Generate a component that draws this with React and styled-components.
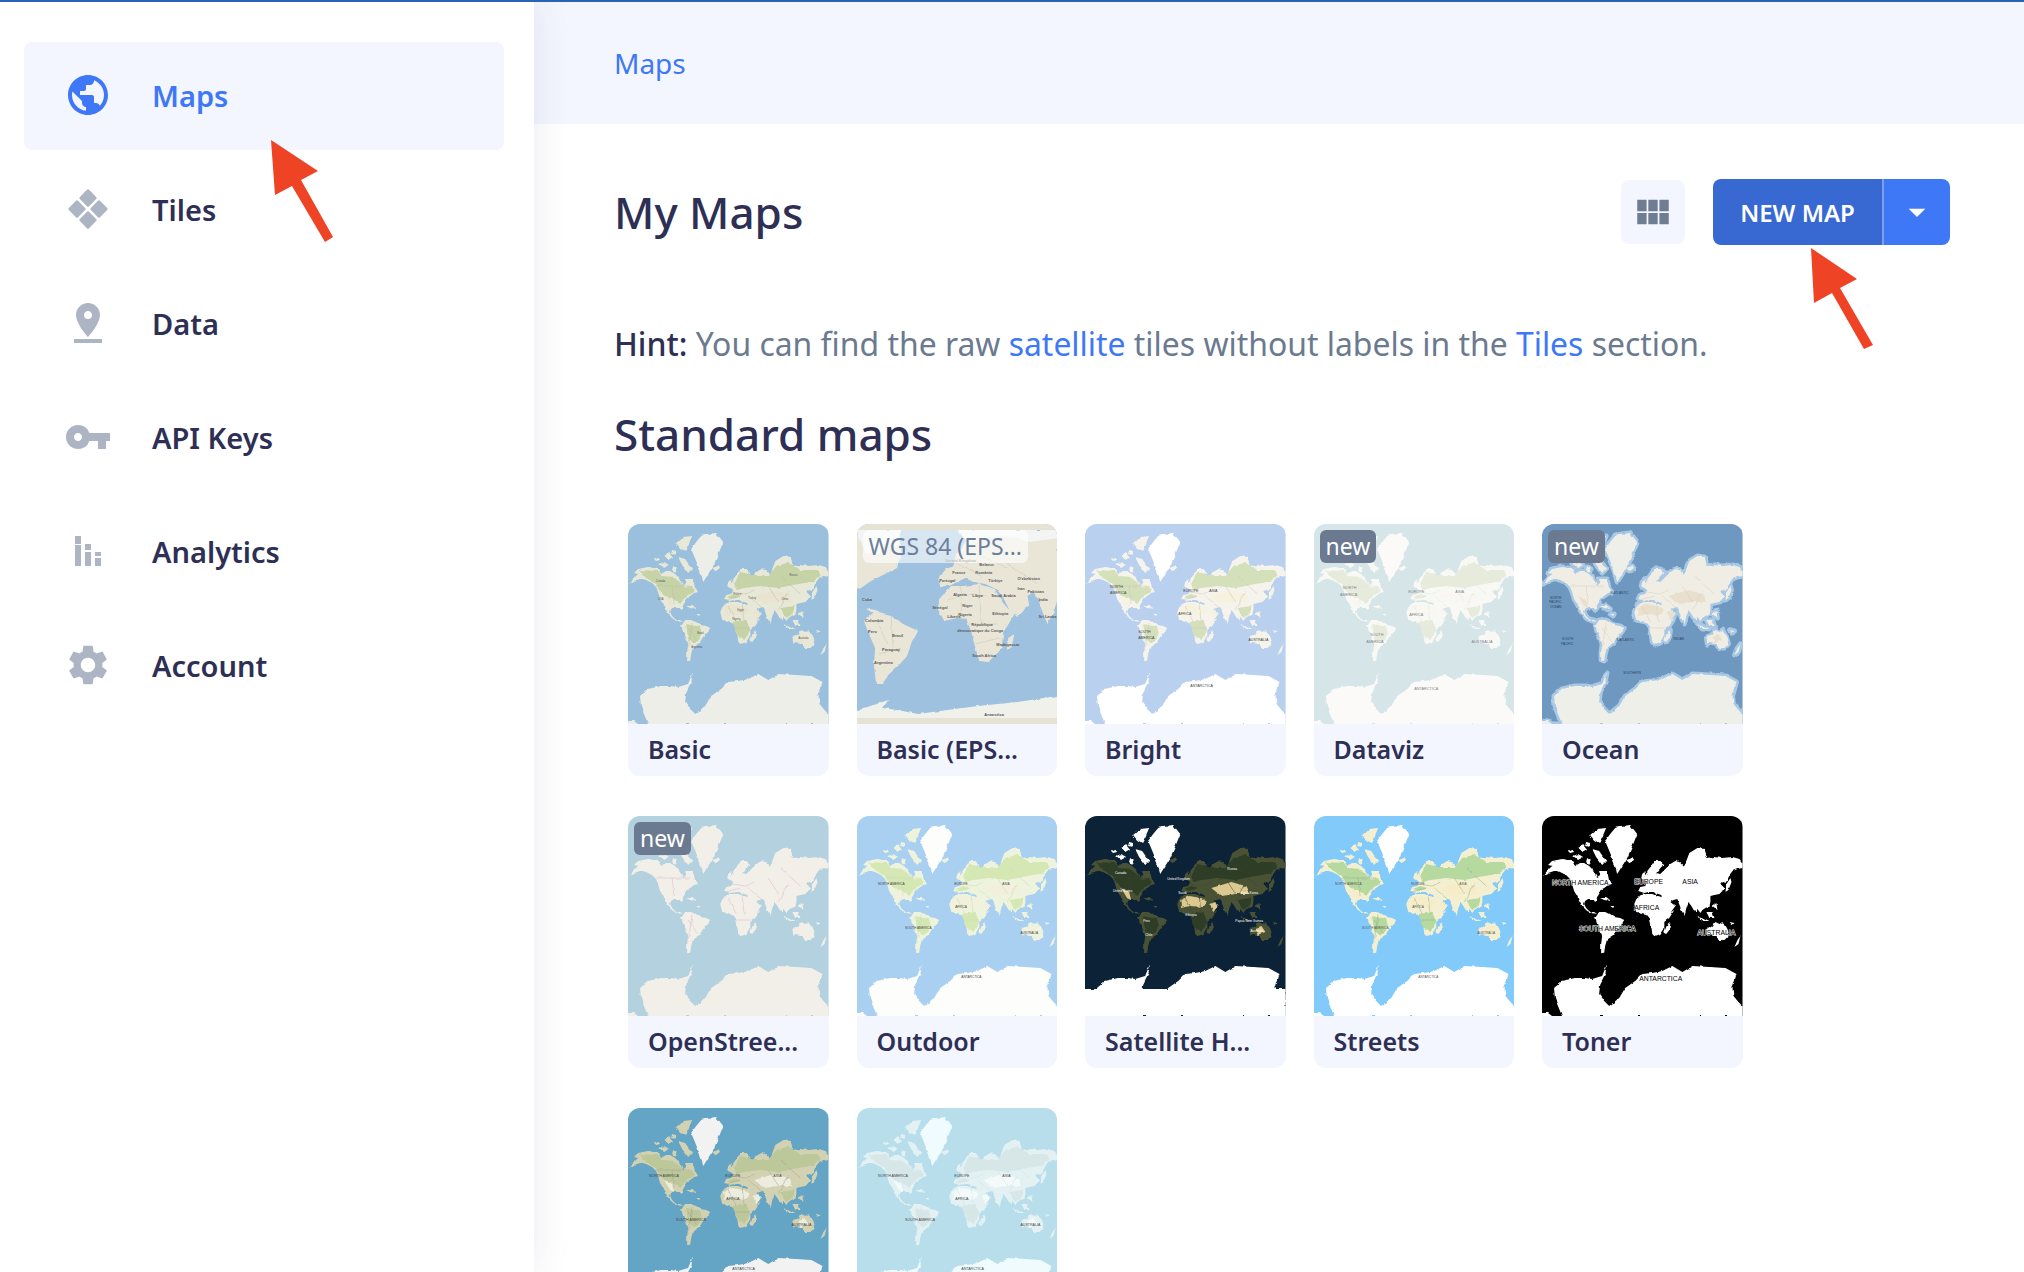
import React from "react";
import styled, { createGlobalStyle } from "styled-components";
import { MdPublic, MdPinDrop, MdVpnKey, MdSettings, MdViewModule, MdArrowDropDown } from "react-icons/md";

const GlobalStyle = createGlobalStyle`
  html, body {
    margin: 0;
    padding: 0;
    height: 100%;
    overflow: hidden;
    background: #fff;
    font-family: "Noto Sans", "Open Sans", sans-serif;
  }
`;

const Page = styled.div`
  position: relative;
  display: flex;
  height: 1272px;
  overflow: hidden;
  border-top: 2px solid #2a62b8;
  box-sizing: border-box;
`;

const Sidebar = styled.nav`
  position: relative;
  z-index: 2;
  flex: 0 0 534px;
  box-sizing: border-box;
  padding: 40px 30px 0 24px;
  background: #fff;
  box-shadow: 0 0 36px rgba(60, 60, 110, 0.1);
`;

const NavItem = styled.a`
  display: flex;
  align-items: center;
  height: 108px;
  margin-bottom: 6px;
  padding: 0 0 2px 44px;
  box-sizing: border-box;
  border-radius: 8px;
  font-size: 29px;
  font-weight: 600;
  color: ${({ $active }) => ($active ? "#3f78f7" : "#2e2f55")};
  background: ${({ $active }) => ($active ? "#f3f6fe" : "transparent")};
`;

const NavIcon = styled.span`
  display: flex;
  align-items: center;
  justify-content: center;
  width: 40px;
  height: 40px;
  margin-right: 44px;
  color: ${({ $active }) => ($active ? "#3f78f7" : "#adb5c5")};

  svg {
    flex: none;
  }
`;

const Main = styled.main`
  flex: 1;
  min-width: 0;
`;

const Crumbs = styled.header`
  display: flex;
  align-items: center;
  height: 122px;
  padding-left: 80px;
  background: #f3f6fe;
  font-size: 28px;
  color: #3f78f7;
`;

const Content = styled.div`
  padding: 0 74px 0 80px;
`;

const TitleRow = styled.div`
  display: flex;
  align-items: center;
  justify-content: space-between;
  height: 66px;
  margin-top: 55px;
`;

const PageTitle = styled.h1`
  margin: 0;
  font-size: 44px;
  font-weight: 500;
  color: #2e2f55;
`;

const Actions = styled.div`
  display: flex;
  align-items: center;
  gap: 28px;
`;

const ViewButton = styled.button`
  display: flex;
  align-items: center;
  justify-content: center;
  width: 64px;
  height: 64px;
  padding: 0;
  border: 0;
  border-radius: 8px;
  background: #f3f6fe;
  color: #6f7d92;
`;

const SplitButton = styled.div`
  display: flex;
  height: 66px;
  border-radius: 8px;
  overflow: hidden;
`;

const NewButton = styled.button`
  width: 169px;
  padding: 0;
  border: 0;
  background: #3868d2;
  color: #fff;
  font-family: inherit;
  font-size: 24px;
  font-weight: 600;
`;

const CaretButton = styled.button`
  display: flex;
  align-items: center;
  justify-content: center;
  width: 68px;
  padding: 0;
  border: 0;
  border-left: 2px solid #7d9fe8;
  background: #3f78f7;
  color: #fff;
`;

const Hint = styled.p`
  margin: 77px 0 0;
  font-size: 31.9px;
  line-height: 44px;
  color: #6b7a90;
  white-space: nowrap;
`;

const HintLabel = styled.strong`
  font-weight: 500;
  color: #2e2f55;
`;

const TextLink = styled.a`
  color: #3f78f7;
`;

const SectionTitle = styled.h2`
  margin: 38px 0 0;
  font-size: 44px;
  font-weight: 500;
  line-height: 60px;
  color: #2e2f55;
`;

const MapGrid = styled.div`
  display: grid;
  grid-template-columns: repeat(5, 200.5px);
  column-gap: 28px;
  row-gap: 40px;
  margin: 60px 0 0 14px;
`;

const Card = styled.div`
  position: relative;
  border-radius: 12px;
  overflow: hidden;
  background: #f3f6fe;
`;

const MapImage = styled.svg`
  display: block;
  width: 100%;
  height: 200px;
`;

const CardLabel = styled.div`
  height: 52px;
  padding-left: 20px;
  font-size: 25px;
  font-weight: 600;
  line-height: 51px;
  color: #2e2f55;
  white-space: nowrap;
`;

const Badge = styled.span`
  position: absolute;
  top: 6px;
  left: 6px;
  box-sizing: border-box;
  height: 33px;
  padding: 0 6px;
  border-radius: 6px;
  font-size: 23px;
  line-height: 32px;
  white-space: nowrap;
  color: ${({ $light }) => ($light ? "#6b7f9c" : "#fff")};
  background: ${({ $light }) => ($light ? "rgba(255, 255, 255, 0.6)" : "#6b7a90")};
`;

const ArrowLayer = styled.svg`
  position: absolute;
  z-index: 3;
  top: -2px;
  left: 0;
  width: 2024px;
  height: 1272px;
  pointer-events: none;
`;

const TilesIcon = () => (
  <svg width="40" height="40" viewBox="0 0 40 40" fill="currentColor">
    <rect x="13.5" y="2.5" width="13" height="13" rx="1.5" transform="rotate(45 20 9)" />
    <rect x="2.5" y="13.5" width="13" height="13" rx="1.5" transform="rotate(45 9 20)" />
    <rect x="24.5" y="13.5" width="13" height="13" rx="1.5" transform="rotate(45 31 20)" />
    <rect x="13.5" y="24.5" width="13" height="13" rx="1.5" transform="rotate(45 20 31)" />
  </svg>
);

const BarsIcon = () => (
  <svg width="26" height="30" viewBox="0 0 26 30" fill="currentColor">
    <rect x="0" y="0" width="6" height="8" />
    <rect x="0" y="9" width="6" height="21" />
    <rect x="10" y="8" width="6" height="6" />
    <rect x="10" y="16" width="6" height="14" />
    <rect x="20" y="16" width="6" height="4" />
    <rect x="20" y="22" width="6" height="8" />
  </svg>
);

// outlines traced off the 200x200 thumbnails
const WORLD = {
  america:
    "M10 45 20 43 30 45 33 50 38 47 42 47 47 50 50 53 52 57 55 62 58 60 57 55 60 55 65 55 66 60 67 65 70 68 66 69 62 72 58 74 57 78 55 81 54 85 53 86 51 83 46 83 43 85 42 88 44 92 47 95 52 96 55 98 50 97 45 95 41 91 38 86 35 80 32 75 30 68 28 63 24 59 20 57 16 55 12 55 6 57 1 60 6 54 10 50 6 49Z",
  arctic:
    "M48 19 55 13 64 12 61 19 57 27 52 24Z M50 33 57 35 64 45 60 49 54 41Z M36 32 41 29 45 34 40 37Z M31 40 36 38 41 41 36 44Z M45 42 49 45 47 49 44 46Z M26 35 30 33 32 36 28 37Z M44 26 48 27 47 31 43 30Z",
  greenland: "M68 18 73 12 78 10 88 9 95 18 91 28 85 42 80 50 75 58 72 47 68 37 63 25Z",
  south: "M57 96 64 96 68 98 72 101 78 102 82 104 79 109 75 113 71 119 65 123 63 130 62 137 59 136 59 128 60 120 58 114 55 108 53 102Z",
  africa: "M92 88 95 81 99 79 104 78 111 78 116 80 122 82 125 88 129 96 132 94 127 102 122 106 122 113 118 119 113 121 110 118 109 110 108 103 104 98 99 97 94 96Z",
  eurasia:
    "M96 75 98 71 103 70 105 66 101 63 105 59 105 55 109 50 112 45 118 45 123 48 119 51 114 57 118 58 122 54 128 48 133 45 138 46 142 50 147 37 155 32 162 33 165 42 172 41 180 42 190 41 197 43 200 47 200 52 195 53 190 55 187 59 185 64 183 67 179 65 178 68 182 72 179 76 177 78 172 79 168 80 168 86 167 90 163 92 160 94 158 97 155 93 153 97 149 90 146 86 144 92 142 100 139 94 135 83 131 84 128 86 133 90 128 97 123 90 120 84 119 79 116 78 112 76 106 76 102 77Z",
  aussie: "M164 114 170 110 173 106 177 108 180 106 184 113 186 120 182 124 177 124 172 119 167 118 165 120Z",
  islands:
    "M84 44 90 42 92 45 87 47Z M100 58 103 55 104 60 101 64 99 62Z M184 68 188 62 189 66 186 74 183 76Z M125 108 128 106 127 114 124 118 122 116Z M155 100 161 102 167 105 160 105Z M164 96 170 96 172 102 167 102Z M170 90 174 87 175 94Z M195 124 198 120 196 128 192 131Z M58 82 64 82 68 85 62 84Z M68 90 72 90 71 92Z M187 106 192 107 190 109Z",
  antarctica:
    "M0 200V197 L6 197 10 200 H20 L18 195 13 183 12 172 20 165 33 162 43 162 50 163 60 160 62 155 65 148 63 158 58 168 57 178 62 185 67 190 72 186 77 182 83 172 93 165 100 158 110 157 120 155 130 150 140 156 150 150 167 151 183 152 194 158 190 172 191 180 196 186 200 190V200Z",
  forest:
    "M11 46 30 47 34 52 46 53 56 63 64 62 66 68 58 72 52 80 44 74 38 72 32 68 28 60 18 54Z M58 100 72 103 74 111 66 120 60 114Z M106 60 112 48 120 50 126 52 140 52 148 42 160 38 172 46 190 46 192 52 184 58 170 60 150 64 132 62 116 64 108 66Z M104 98 118 96 122 106 116 116 110 112Z M152 84 166 82 164 90 158 94Z M99 73 106 70 112 72 104 75Z",
  desert:
    "M95 84 104 80 116 82 122 86 118 91 104 90 96 92Z M124 88 130 86 132 90 128 95Z M126 72 146 66 160 70 164 78 150 78 136 80Z M170 112 176 110 180 116 172 119Z M36 72 44 76 46 84 42 82Z",
  borders:
    "M28 62 62 62 M44 62 46 80 M97 76 112 72 M104 68 118 70 126 66 M140 62 150 78 M160 66 150 86 M100 82 108 98 M114 80 116 100 M60 104 70 118 M64 98 60 126 M120 72 134 84 M152 52 172 70 M108 104 122 104",
};

const WGS = {
  northern: "M0 6H42L44 30 40 44 28 50 14 57 4 64 0 66Z",
  eurasia:
    "M82 56 87 46 96 42 100 30 108 18 118 8 150 8 172 16 200 8V76L196 88 190 100 185 88 181 76 176 68 170 72 172 82 160 92 152 86 146 74 140 66 128 60 116 58 108 54 100 58 92 62 84 62Z",
  ice: "M0 6H44L40 24 30 18 22 30 8 28Z M100 6H200V14L172 18 150 12 124 14 112 20Z",
  africa:
    "M82 75 94 62 106 62 121 60 137 65 145 78 151 85 159 87 150 102 146 108 144 125 131 138 122 137 117 120 114 108 109 95 100 94 87 97 81 85Z",
  south: "M7 97 17 88 34 92 46 100 61 107 54 120 50 132 41 142 30 152 26 160 19 160 17 142 18 124 11 108Z",
  madagascar: "M151 114 157 110 154 124 149 126Z",
  cuba: "M8 84 18 86 24 90 14 88Z",
  antarctica: "M6 184 20 180 31 176 26 184 40 186 61 190 90 186 121 182 160 178 200 172V200H0V188Z",
  borders:
    "M90 76 110 70 130 72 M104 62 104 96 M122 62 124 100 M112 100 140 100 M118 120 142 114 M20 96 30 120 M34 92 36 124 M22 130 44 124 M120 30 150 44 M150 40 180 60 M100 40 124 52",
};

const CONTINENTS = [[21, 69, "NORTH AMERICA"], [97, 69, "EUROPE"], [145, 69, "ASIA"], [98, 92, "AFRICA"], [48, 113, "SOUTH AMERICA"], [163, 118, "AUSTRALIA"], [104, 162, "ANTARCTICA"]];

const VARIANTS = {
  basic: {
    ocean: "#9bc0dd", land: "#e8e8d8", ice: "#eeeee9", forest: "#c5d3a6", desert: "#e9e4cf", line: "#bdbda8",
    text: "#555", size: 2.6,
    labels: [[28, 58, "Canada"], [30, 76, "USA"], [105, 71, "France"], [120, 75, "Turkey"], [153, 76, "China"], [161, 52, "Russia"], [109, 87, "Egypt"], [104, 96, "Nigeria"], [69, 110, "Brazil"], [170, 115, "Australia"], [63, 124, "Argentina"]],
  },
  bright: {
    ocean: "#b9d0ee", land: "#f5f3ec", ice: "#fff", forest: "#d4e0ba", desert: "#f6f2e0", line: "#c9c6b8",
    text: "#444", size: 3.6,
    labels: [[25, 64, "NORTH"], [25, 70, "AMERICA"], [98, 68, "EUROPE"], [124, 68, "ASIA"], [93, 91, "AFRICA"], [53, 109, "SOUTH"], [53, 115, "AMERICA"], [163, 117, "AUSTRALIA"], [105, 163, "ANTARCTICA"]],
  },
  dataviz: {
    ocean: "#d6e5e8", land: "#f8f8f5", ice: "#fbfaf8", forest: "#e6ebdc", desert: "#f8f7f2", line: "#e4e4dc",
    text: "#7f8688", size: 3.8,
    labels: [[29, 65, "NORTH"], [26, 72, "AMERICA"], [94, 69, "EUROPE"], [141, 69, "ASIA"], [95, 92, "AFRICA"], [56, 112, "SOUTH"], [52, 119, "AMERICA"], [157, 119, "AUSTRALIA"], [100, 166, "ANTARCTICA"]],
  },
  ocean: {
    ocean: "#6f98c0", shelf: "#a8c8e4", land: "#f0ede4", ice: "#efefea", desert: "#e8dfcc", line: "#d8cdb8",
    text: "#2e4560", size: 3.2,
    labels: [[8, 75, "NORTH"], [7, 79, "PACIFIC"], [8, 84, "OCEAN"], [68, 70, "N.ATLANTIC"], [20, 116, "SOUTH"], [19, 121, "PACIFIC"], [74, 117, "S.ATLANTIC"], [131, 116, "INDIAN"], [81, 150, "SOUTHERN"]],
  },
  osm: { ocean: "#b3d1de", land: "#f2efe9", ice: "#f2efe9", line: "#d6b6c6" },
  outdoor: {
    ocean: "#a9cff1", land: "#eef3de", ice: "#fdfdfb", forest: "#d5e8b4", desert: "#f2f0dc", line: "#cbd8b0",
    text: "#444", size: 3.2, labels: CONTINENTS,
  },
  satellite: {
    ocean: "#0c2236", land: "#4a5236", ice: "#fff", forest: "#2e3d25", desert: "#dcc98f", line: "#3c4530", polar: true,
    text: "#fff", size: 3.2,
    labels: [[30, 58, "Canada"], [82, 64, "United Kingdom"], [28, 76, "United States"], [142, 54, "Russia"], [93, 78, "Saudi"], [155, 78, "South Korea"], [100, 100, "Ethiopia"], [58, 106, "Peru"], [150, 106, "Papua New Guinea"], [165, 116, "Australia"], [60, 120, "Chile"]],
  },
  streets: {
    ocean: "#82cafa", land: "#f5efd2", ice: "#fff", forest: "#b6d9a0", desert: "#f6edc8", line: "#8fae84",
    text: "#555", size: 3.2, labels: CONTINENTS,
  },
  toner: {
    ocean: "#000", land: "#fff", ice: "#fff", text: "#000", halo: "#fff", size: 6.8,
    labels: [[10, 69, "NORTH AMERICA"], [92, 68, "EUROPE"], [140, 68, "ASIA"], [92, 94, "AFRICA"], [37, 115, "SOUTH AMERICA"], [155, 119, "AUSTRALIA"], [97, 165, "ANTARCTICA"]],
  },
  topo: {
    ocean: "#64a4c4", land: "#d2d2b2", ice: "#f2f2f2", forest: "#bcc79a", desert: "#ececdf", line: "#a3a38c",
    text: "#444", size: 3.6, labels: CONTINENTS,
  },
  light: {
    ocean: "#b8deec", land: "#e3f1f3", ice: "#effbfd", forest: "#d7e7e8", desert: "#f4fafa", line: "#cfe2e4",
    text: "#444", size: 3.6, labels: CONTINENTS,
  },
};

const LAND_KEYS = ["america", "south", "africa", "eurasia", "aussie", "islands"];

const WorldMap = ({ variant }) => {
  const v = VARIANTS[variant];
  const rough = `rough-${variant}`;
  return (
    <MapImage viewBox="0 0 200 200" preserveAspectRatio="none">
      <defs>
        <filter id={rough} x="-5%" y="-5%" width="110%" height="110%" colorInterpolationFilters="sRGB">
          <feTurbulence type="fractalNoise" baseFrequency="0.16" numOctaves="2" seed="4" />
          <feDisplacementMap in="SourceGraphic" scale="3" xChannelSelector="R" yChannelSelector="G" />
          <feGaussianBlur stdDeviation="0.25" />
        </filter>
      </defs>
      <rect width="200" height="200" fill={v.ocean} />
      <g filter={`url(#${rough})`}>
        {v.shelf && (
          <g fill={v.shelf} stroke={v.shelf} strokeWidth="5" strokeLinejoin="round">
            {LAND_KEYS.map((k) => <path key={k} d={WORLD[k]} />)}
            <path d={WORLD.arctic} />
            <path d={WORLD.greenland} />
            <path d={WORLD.antarctica} />
          </g>
        )}
        <g fill={v.land}>
          {LAND_KEYS.map((k) => <path key={k} d={WORLD[k]} />)}
        </g>
        <path d={WORLD.arctic} fill={v.polar ? v.ice : v.land} />
        {v.forest && <path d={WORLD.forest} fill={v.forest} />}
        {v.desert && <path d={WORLD.desert} fill={v.desert} />}
        {v.line && <path d={WORLD.borders} fill="none" stroke={v.line} strokeWidth="0.5" />}
        <path d={WORLD.greenland} fill={v.ice} />
        <path d={WORLD.antarctica} fill={v.ice} />
        {v.polar && <rect y="173" width="200" height="27" fill={v.ice} />}
      </g>
      {v.labels && (
        <g fontFamily="Liberation Sans, sans-serif" fontSize={v.size} fill={v.text}>
          {v.labels.map(([x, y, t]) => (
            <text key={t + y} x={x} y={y} stroke={v.halo} strokeWidth={v.halo ? 0.9 : 0} paintOrder="stroke">{t}</text>
          ))}
        </g>
      )}
    </MapImage>
  );
};

const WGS_LABELS = [
  [88, 38, "United Kingdom"], [122, 42, "Belarus"], [95, 50, "France"], [118, 50, "România"],
  [82, 58, "Portugal"], [131, 58, "Türkiye"], [160, 56, "O'zbekiston"], [160, 66, "Iran"],
  [96, 72, "Algeria"], [115, 73, "Libya"], [134, 73, "Saudi Arabia"], [170, 69, "Pakistan"],
  [5, 77, "Cuba"], [75, 85, "Sénégal"], [105, 83, "Niger"], [181, 77, "India"],
  [8, 98, "Colombia"], [11, 109, "Peru"], [35, 113, "Brasil"], [101, 92, "Nigeria"],
  [135, 91, "Ethiopia"], [90, 94, "Liberia"], [114, 102, "République"], [100, 108, "démocratique du Congo"],
  [25, 127, "Paraguay"], [17, 140, "Argentina"], [139, 122, "Madagascar"], [115, 133, "South Africa"],
  [181, 94, "Sri Lanka"], [127, 192, "Antarctica"],
];

const WgsMap = () => (
  <MapImage viewBox="0 0 200 200" preserveAspectRatio="none">
    <defs>
      <filter id="rough-wgs" x="-5%" y="-5%" width="110%" height="110%" colorInterpolationFilters="sRGB">
        <feTurbulence type="fractalNoise" baseFrequency="0.14" numOctaves="2" seed="7" />
        <feDisplacementMap in="SourceGraphic" scale="3" xChannelSelector="R" yChannelSelector="G" />
      </filter>
    </defs>
    <rect width="200" height="200" fill="#9dc1de" />
    <g filter="url(#rough-wgs)">
      <g fill="#e9e6d8">
        <path d={WGS.northern} />
        <path d={WGS.eurasia} />
        <path d={WGS.africa} />
        <path d={WGS.south} />
        <path d={WGS.madagascar} />
        <path d={WGS.cuba} />
      </g>
      <path d={WGS.ice} fill="#f3f5f4" />
      <path d={WGS.antarctica} fill="#f1f1ec" />
      <path d={WGS.borders} fill="none" stroke="#c9c5b2" strokeWidth="0.5" />
    </g>
    <rect width="200" height="6" fill="#e6e3d5" />
    <rect y="194" width="200" height="6" fill="#e6e3d5" />
    <g fontFamily="Liberation Sans, sans-serif" fontSize="4" fontWeight="700" fill="#5a5a5a">
      {WGS_LABELS.map(([x, y, t]) => <text key={t} x={x} y={y}>{t}</text>)}
    </g>
  </MapImage>
);

const NAV = [
  { label: "Maps", icon: <MdPublic size={48} />, active: true },
  { label: "Tiles", icon: <TilesIcon /> },
  { label: "Data", icon: <MdPinDrop size={48} /> },
  { label: "API Keys", icon: <MdVpnKey size={48} /> },
  { label: "Analytics", icon: <BarsIcon /> },
  { label: "Account", icon: <MdSettings size={48} /> },
];

const MAPS = [
  { name: "Basic", variant: "basic" },
  { name: "Basic (EPS...", variant: "wgs" },
  { name: "Bright", variant: "bright" },
  { name: "Dataviz", variant: "dataviz", isNew: true },
  { name: "Ocean", variant: "ocean", isNew: true },
  { name: "OpenStree...", variant: "osm", isNew: true },
  { name: "Outdoor", variant: "outdoor" },
  { name: "Satellite H...", variant: "satellite" },
  { name: "Streets", variant: "streets" },
  { name: "Toner", variant: "toner" },
  { variant: "topo" },
  { variant: "light" },
];

export default function App() {
  return (
    <Page>
      <GlobalStyle />
      <Sidebar>
        {NAV.map((item) => (
          <NavItem key={item.label} $active={item.active}>
            <NavIcon $active={item.active}>{item.icon}</NavIcon>
            {item.label}
          </NavItem>
        ))}
      </Sidebar>
      <Main>
        <Crumbs>Maps</Crumbs>
        <Content>
          <TitleRow>
            <PageTitle>My Maps</PageTitle>
            <Actions>
              <ViewButton><MdViewModule size={42} /></ViewButton>
              <SplitButton>
                <NewButton>NEW MAP</NewButton>
                <CaretButton><MdArrowDropDown size={40} /></CaretButton>
              </SplitButton>
            </Actions>
          </TitleRow>
          <Hint>
            <HintLabel>Hint:</HintLabel> You can find the raw <TextLink>satellite</TextLink> tiles without labels in the <TextLink>Tiles</TextLink> section.
          </Hint>
          <SectionTitle>Standard maps</SectionTitle>
          <MapGrid>
            {MAPS.map((m) => (
              <Card key={m.variant}>
                {m.variant === "wgs" ? <WgsMap /> : <WorldMap variant={m.variant} />}
                {m.variant === "wgs" && <Badge $light>WGS 84 (EPS...</Badge>}
                {m.isNew && <Badge>new</Badge>}
                {m.name && <CardLabel>{m.name}</CardLabel>}
              </Card>
            ))}
          </MapGrid>
        </Content>
      </Main>
      <ArrowLayer viewBox="0 0 2024 1272">
        <polygon fill="#ee4325" points="271,140 318,171 301,180 333,237 325,242 292,186 275,195" />
        <polygon fill="#ee4325" points="1811,248 1857,279 1840,288 1873,345 1864,349 1832,293 1814,303" />
      </ArrowLayer>
    </Page>
  );
}
